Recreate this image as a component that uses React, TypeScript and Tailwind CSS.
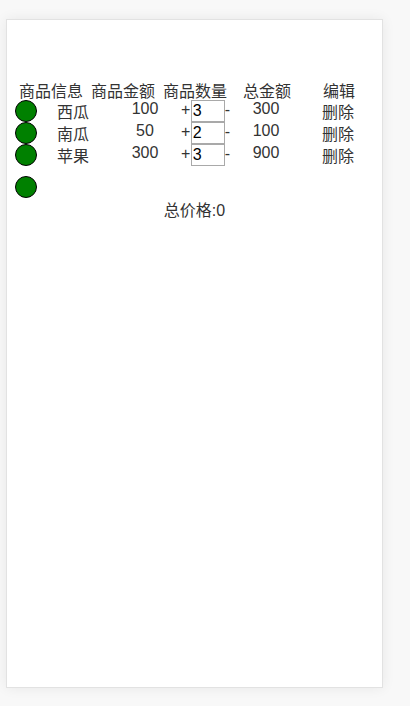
import { useState } from "react";

type Item = { id: number; name: string; price: number; count: number };

const initial: Item[] = [
  { id: 1, name: "西瓜", price: 100, count: 3 },
  { id: 2, name: "南瓜", price: 50, count: 2 },
  { id: 3, name: "苹果", price: 300, count: 3 },
];

const font = { fontFamily: '"Liberation Sans", "Noto Sans CJK SC", sans-serif' };

/* ── green round check box ── */
const Dot = () => (
  <span className="block w-[22px] h-[22px] shrink-0 rounded-full bg-[#008000] border border-black" />
);

const App = () => {
  const [items, setItems] = useState<Item[]>(initial);

  const setCount = (id: number, count: number) => {
    setItems((prev) => prev.map((it) => (it.id === id ? { ...it, count } : it)));
  };

  return (
    <div className="min-h-[706px] w-full bg-[#f8f8f8] pt-[19px] pl-[6px]" style={font}>
      <div className="w-[377px] h-[669px] bg-white border border-[#e2e2e2] shadow-[0_0_12px_rgba(0,0,0,0.07)] pt-[64px] pl-[8px] text-[16px] text-[#333]">
        {/* header */}
        <div className="flex h-[16px] leading-4">
          <div className="w-[72px] text-center">商品信息</div>
          <div className="w-[72px] text-center">商品金额</div>
          <div className="w-[72px] text-center">商品数量</div>
          <div className="w-[72px] text-center">总金额</div>
          <div className="w-[72px] text-center">编辑</div>
        </div>

        {/* rows */}
        {items.map((it) => (
          <div key={it.id} className="flex items-start h-[22px]">
            <Dot />
            <div className="w-[72px] text-center leading-[14px] pt-[6px]">{it.name}</div>
            <div className="w-[72px] text-center leading-[14px] pt-[2px]">{it.price}</div>
            <div className="w-[49px] flex items-start">
              <span className="w-[10px] leading-[14px] mt-[3px]">+</span>
              <input
                className="w-[34px] h-[22px] border border-[#a9a9a9] px-[1px] text-[16px] text-black outline-none"
                style={font}
                value={it.count}
                onChange={(e) => setCount(it.id, Number(e.target.value) || 0)}
              />
              <span className="leading-[14px] mt-[3px]">-</span>
            </div>
            <div className="w-[72px] text-center leading-[14px] pt-[2px]">{it.price * it.count}</div>
            <div className="w-[72px] text-center leading-[14px] pt-[6px]">删除</div>
          </div>
        ))}

        {/* select all */}
        <div className="mt-[10px]">
          <Dot />
        </div>

        <div className="mt-[5px] -ml-[8px] text-center leading-4">总价格:0</div>
      </div>
    </div>
  );
};

export default App;
